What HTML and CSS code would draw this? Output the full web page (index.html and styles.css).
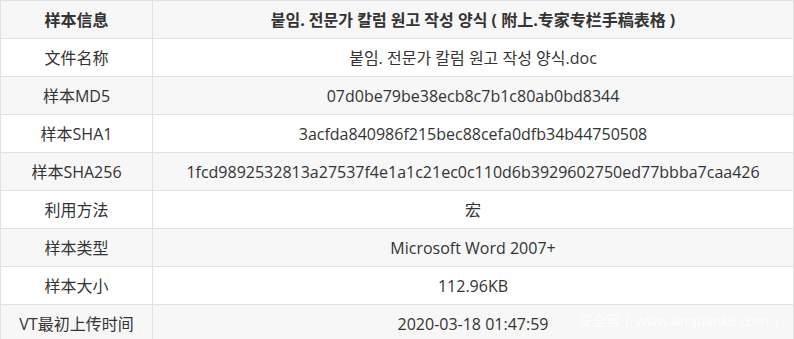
FILE: index.html
```html
<!DOCTYPE html>
<html lang="zh-CN">
<head>
  <meta charset="UTF-8" />
  <meta name="viewport" content="width=device-width, initial-scale=1.0" />
  <title>样本信息</title>
  <link rel="stylesheet" href="styles.css">
</head>
<body>
  <div class="wrap">
    <table class="info">
      <tr class="head">
        <th class="key">样本信息</th>
        <th>붙임. 전문가 칼럼 원고 작성 양식 ( 附上.专家专栏手稿表格 )</th>
      </tr>
      <tr>
        <td class="key">文件名称</td>
        <td>붙임. 전문가 칼럼 원고 작성 양식.doc</td>
      </tr>
      <tr>
        <td class="key">样本MD5</td>
        <td>07d0be79be38ecb8c7b1c80ab0bd8344</td>
      </tr>
      <tr>
        <td class="key">样本SHA1</td>
        <td>3acfda840986f215bec88cefa0dfb34b44750508</td>
      </tr>
      <tr>
        <td class="key">样本SHA256</td>
        <td>1fcd9892532813a27537f4e1a1c21ec0c110d6b3929602750ed77bbba7caa426</td>
      </tr>
      <tr>
        <td class="key">利用方法</td>
        <td>宏</td>
      </tr>
      <tr>
        <td class="key">样本类型</td>
        <td>Microsoft Word 2007+</td>
      </tr>
      <tr>
        <td class="key">样本大小</td>
        <td>112.96KB</td>
      </tr>
      <tr>
        <td class="key">VT最初上传时间</td>
        <td>2020-03-18 01:47:59</td>
      </tr>
    </table>
    <!-- 水印 -->
    <div class="watermark">安全客 ( www.anquanke.com )</div>
  </div>
</body>
</html>
```

FILE: styles.css
```css
* { box-sizing: border-box; }
body {
  margin: 0;
  padding: 0;
  background: #fff;
  font-family: 'Open Sans', 'Noto Sans CJK SC', sans-serif;
  color: #333;
}
.wrap {
  position: relative;
  width: 794px;
}
.info {
  width: 794px;
  border-collapse: collapse;
  font-size: 16px;
}
.info th,
.info td {
  height: 38px;
  padding: 0 8px;
  border: 1px solid #dfe1e5;
  text-align: center;
  vertical-align: middle;
  line-height: 20px;
}
.info th {
  font-weight: 700;
}
.info .key {
  width: 152px;
}
.info tr:nth-child(odd) {
  background: #f7f7f7;
}
.watermark {
  position: absolute;
  left: 578px;
  top: 311px;
  line-height: 20px;
  font-size: 14px;
  word-spacing: 2px;
  color: rgba(255, 255, 255, 0.9);
  white-space: nowrap;
}
```
